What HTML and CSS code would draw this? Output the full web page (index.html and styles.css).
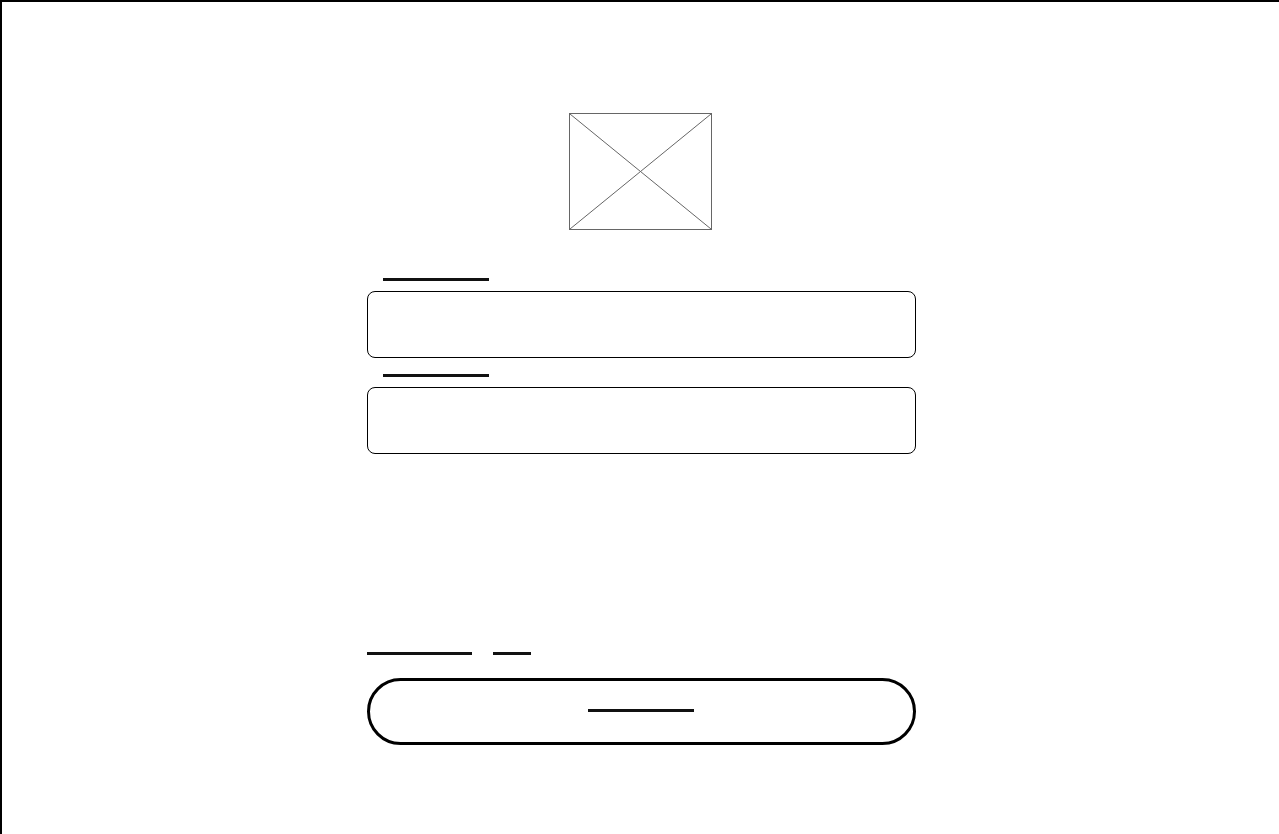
FILE: index.html
```html
<!DOCTYPE html>
<html lang="en">
<head>
    <meta charset="UTF-8">
    <meta name="viewport" content="width=device-width, initial-scale=1.0">
    <title>Login</title>
    <link rel="stylesheet" href="styles.css">
</head>
<body>

    <div class="frame">
        <div class="form">

            <div class="logo">
                <svg width="143" height="117" viewBox="0 0 143 117">
                    <rect x="0.5" y="0.5" width="142" height="116" fill="none" stroke="#666" stroke-width="1"/>
                    <line x1="1" y1="1" x2="142" y2="116" stroke="#666" stroke-width="1"/>
                    <line x1="142" y1="1" x2="1" y2="116" stroke="#666" stroke-width="1"/>
                </svg>
            </div>

            <div class="field">
                <span class="label-line"></span>
                <div class="input"></div>
            </div>

            <div class="field second">
                <span class="label-line"></span>
                <div class="input"></div>
            </div>

            <div class="links">
                <span class="link-line long"></span>
                <span class="link-line short"></span>
            </div>

            <button class="submit"><span class="btn-line"></span></button>

        </div>
    </div>

</body>
</html>
```

FILE: styles.css
```css
body { margin: 0; padding: 0; background: #fff; font-family: "Liberation Sans", Arial, sans-serif; overflow: hidden; }

.frame {
    box-sizing: border-box;
    height: 100vh;
    border-top: 2px solid #000;
    border-left: 2px solid #000;
    padding-top: 111px;
    padding-left: 1px;
}

.form {
    width: 549px;
    margin: 0 auto;
    display: flex;
    flex-direction: column;
}

.logo { display: flex; justify-content: center; }
.logo svg { display: block; margin-right: 2px; }

.field { display: flex; flex-direction: column; margin-top: 48px; }
.field.second { margin-top: 16px; }

.label-line {
    display: block;
    width: 106px;
    height: 3px;
    margin-left: 16px;
    background: #111;
}

.input {
    box-sizing: border-box;
    height: 67px;
    margin-top: 10px;
    border: 1px solid #000;
    border-radius: 8px;
}

.links { display: flex; gap: 21px; margin-top: 198px; }
.link-line { display: block; height: 3px; background: #111; }
.link-line.long { width: 105px; }
.link-line.short { width: 38px; }

.submit {
    box-sizing: border-box;
    height: 67px;
    margin-top: 23px;
    border: 3px solid #000;
    border-radius: 34px;
    background: #fff;
    display: flex;
    align-items: center;
    justify-content: center;
    padding: 0;
}

.btn-line { display: block; width: 106px; height: 3px; background: #111; margin-top: -2px; }
```
